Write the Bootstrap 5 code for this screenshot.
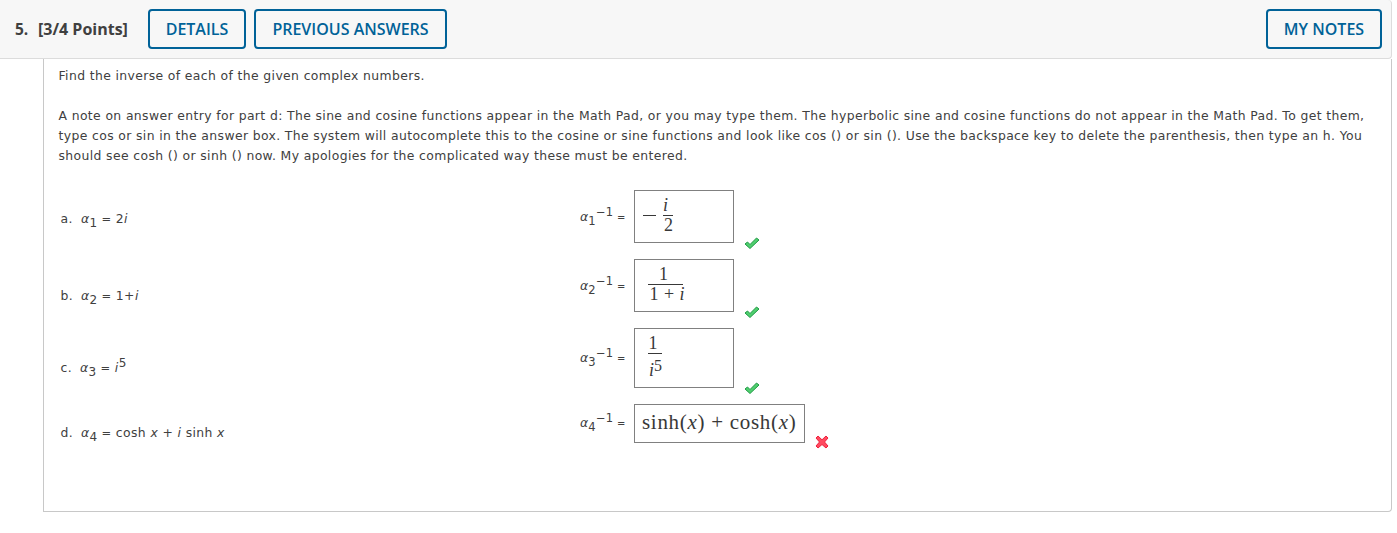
<!DOCTYPE html>
<html lang="en">
<head>
    <meta charset="UTF-8">
    <meta name="viewport" content="width=device-width, initial-scale=1.0">
    <title>Question 5</title>
    <link href="https://cdn.jsdelivr.net/npm/bootstrap@5.3.0/dist/css/bootstrap.min.css" rel="stylesheet">
    <style>
        body { font-family: "DejaVu Sans", sans-serif; font-size: 12.4px; line-height: 20px; color: #404040; }
        .q-header { width: 1392px; height: 59px; padding: 0 9px 0 15px; background: #f7f7f7; border-bottom: 1px solid #dcdcdc; border-right: 1px solid #dcdcdc; border-radius: 0 4px 4px 0; font-family: "Open Sans", sans-serif; font-size: 16px; }
        .q-number { width: 23px; font-size: 15.5px; }
        .q-points { width: 110px; }
        .btn-q { --bs-btn-color: #006298; --bs-btn-border-color: #006298; --bs-btn-hover-bg: #006298; --bs-btn-hover-color: #fff; height: 40px; padding: 0; border-width: 2px; border-radius: 4px; font-size: 16px; font-weight: 600; line-height: 36px; white-space: nowrap; }
        .w-details { width: 98px; }
        .w-previous { width: 193px; }
        .w-notes { width: 116px; }
        .q-body { width: 1349px; height: 453px; margin-left: 43px; padding: 7px 0 0 14.5px; border: 1px solid #c8c8c8; border-top: 0; border-radius: 0 0 4px 0; letter-spacing: .376px; }
        .q-text { white-space: nowrap; }
        .line { display: block; width: max-content; }
        .parts { padding-top: 24px; }
        .part { height: 69px; }
        .part-c { height: 76px; }
        .given { width: 521.5px; padding: 19px 0 0 2px; }
        .part-b .given { padding-top: 27px; }
        .part-c .given { padding-top: 30px; }
        .part-d .given { padding-top: 19px; }
        .inverse { width: 54px; padding-top: 17px; white-space: nowrap; letter-spacing: 0; }
        .part-c .inverse { padding-top: 20px; }
        .part-d .inverse { padding-top: 9px; }
        .lbl { display: inline-block; width: 20.5px; }
        .part-c .lbl { width: 19.5px; }
        .al { font-style: italic; }
        .dn, .up { display: inline-block; font-size: 12px; line-height: 0; vertical-align: -4px; letter-spacing: 0; }
        .up { vertical-align: 5px; }
        .inverse .dn, .inverse .up { font-size: 11.5px; }
        .inverse .up { margin-left: .5px; }
        .inverse .eq { font-size: 10px; }
        .eq { font-size: 11.5px; }
        .answer { width: 100px; height: 53px; padding: 5px 0 0 7px; border: 1px solid #808080; font-family: "Liberation Serif", serif; font-size: 18px; color: #383838; white-space: nowrap; letter-spacing: 0; }
        .part-a .answer { padding-left: 8px; }
        .part-b .answer, .part-c .answer { padding-left: 13px; }
        .part-c .answer { height: 60px; }
        .part-d .answer { width: 171px; height: 39px; padding-top: 7px; font-size: 21px; letter-spacing: .7px; }
        /* operator strokes, thinner and wider than the font's own */
        .minus { width: 13px; height: 1px; margin-top: 19px; background: #383838; }
        .frac { line-height: 19px; }
        .part-a .frac { margin-left: 7px; }
        .frac > span { display: block; text-align: center; }
        .frac > span:first-child { height: 20px; padding-right: 4px; border-bottom: 1px solid #383838; }
        .part-a .frac > span:first-child { width: 10px; padding-right: 5px; }
        .part-a .frac > span:last-child { padding-left: 1px; }
        .part-b .frac > span:last-child { margin-right: -2px; padding-left: 1px; word-spacing: .8px; }
        .part-b .frac > span:first-child { width: 35px; }
        .part-c .frac .up { font-size: 16px; vertical-align: 5px; }
        .part-c .frac > span:last-child { padding-top: 7px; padding-left: 1px; }
        .mark-icon { width: 16px; height: 14px; margin: 46px 0 0 10px; }
        .part-c .mark-icon { margin-top: 53px; }
        .part-d .mark-icon { margin: 31px 0 0 9px; }
    </style>
</head>
<body class="bg-white">
    <header class="q-header d-flex align-items-center">
        <span class="q-number fw-bold">5.</span>
        <span class="q-points fw-bold">[3/4 Points]</span>
        <button type="button" class="btn btn-q w-details me-2">DETAILS</button>
        <button type="button" class="btn btn-q w-previous">PREVIOUS ANSWERS</button>
        <button type="button" class="btn btn-q w-notes ms-auto">MY NOTES</button>
    </header>

    <main class="q-body">
        <div class="q-text">
            <p class="mb-0"><span class="line">Find the inverse of each of the given complex numbers.</span></p>
            <p class="mb-0 pt-3 mt-1">
                <span class="line">A note on answer entry for part d: The sine and cosine functions appear in the Math Pad, or you may type them. The hyperbolic sine and cosine functions do not appear in the Math Pad. To get them,</span>
                <span class="line">type cos or sin in the answer box. The system will autocomplete this to the cosine or sine functions and look like cos () or sin (). Use the backspace key to delete the parenthesis, then type an h. You</span>
                <span class="line">should see cosh () or sinh () now. My apologies for the complicated way these must be entered.</span>
            </p>
        </div>

        <div class="parts">
            <div class="part part-a d-flex">
                <div class="given"><span class="lbl">a.</span><span class="al">α</span><span class="dn">1</span> <span class="eq">=</span> 2<i>i</i></div>
                <div class="inverse"><span class="al">α</span><span class="dn">1</span><span class="up">−1</span> <span class="eq">=</span></div>
                <div class="answer d-flex">
                    <span class="minus"></span>
                    <span class="frac"><span><i>i</i></span><span>2</span></span>
                </div>
                <svg class="mark-icon"><use href="#check"/></svg>
            </div>
            <div class="part part-b d-flex">
                <div class="given"><span class="lbl">b.</span><span class="al">α</span><span class="dn">2</span> <span class="eq">=</span> 1+<i>i</i></div>
                <div class="inverse"><span class="al">α</span><span class="dn">2</span><span class="up">−1</span> <span class="eq">=</span></div>
                <div class="answer">
                    <span class="frac d-inline-block"><span>1</span><span>1 + <i>i</i></span></span>
                </div>
                <svg class="mark-icon"><use href="#check"/></svg>
            </div>
            <div class="part part-c d-flex">
                <div class="given"><span class="lbl">c.</span><span class="al">α</span><span class="dn">3</span> <span class="eq">=</span> <i>i</i><span class="up">5</span></div>
                <div class="inverse"><span class="al">α</span><span class="dn">3</span><span class="up">−1</span> <span class="eq">=</span></div>
                <div class="answer">
                    <span class="frac d-inline-block"><span>1</span><span><i>i</i><span class="up">5</span></span></span>
                </div>
                <svg class="mark-icon"><use href="#check"/></svg>
            </div>
            <div class="part part-d d-flex">
                <div class="given"><span class="lbl">d.</span><span class="al">α</span><span class="dn">4</span> <span class="eq">=</span> cosh <i>x</i> + <i>i</i> sinh <i>x</i></div>
                <div class="inverse"><span class="al">α</span><span class="dn">4</span><span class="up">−1</span> <span class="eq">=</span></div>
                <div class="answer">sinh(<i>x</i>) + cosh(<i>x</i>)</div>
                <svg class="mark-icon"><use href="#cross"/></svg>
            </div>
        </div>
    </main>

    <svg class="d-none">
        <symbol id="check" viewBox="0 0 16 14"><path d="M1 8 3.5 6 6 8.5 12.5 2 15 4 6 12.5Z" fill="#4fce6e" stroke="#1f9a45"/></symbol>
        <symbol id="cross" viewBox="0 0 16 14"><path d="M2 3 4 1 8 4.8 12 1 14 3 10.5 7 14 11 12 13 8 9.5 4 13 2 11 5.5 7Z" fill="#ff4a60" stroke="#f0203c"/></symbol>
    </svg>

    <script src="https://cdn.jsdelivr.net/npm/bootstrap@5.3.0/dist/js/bootstrap.bundle.min.js"></script>
</body>
</html>
